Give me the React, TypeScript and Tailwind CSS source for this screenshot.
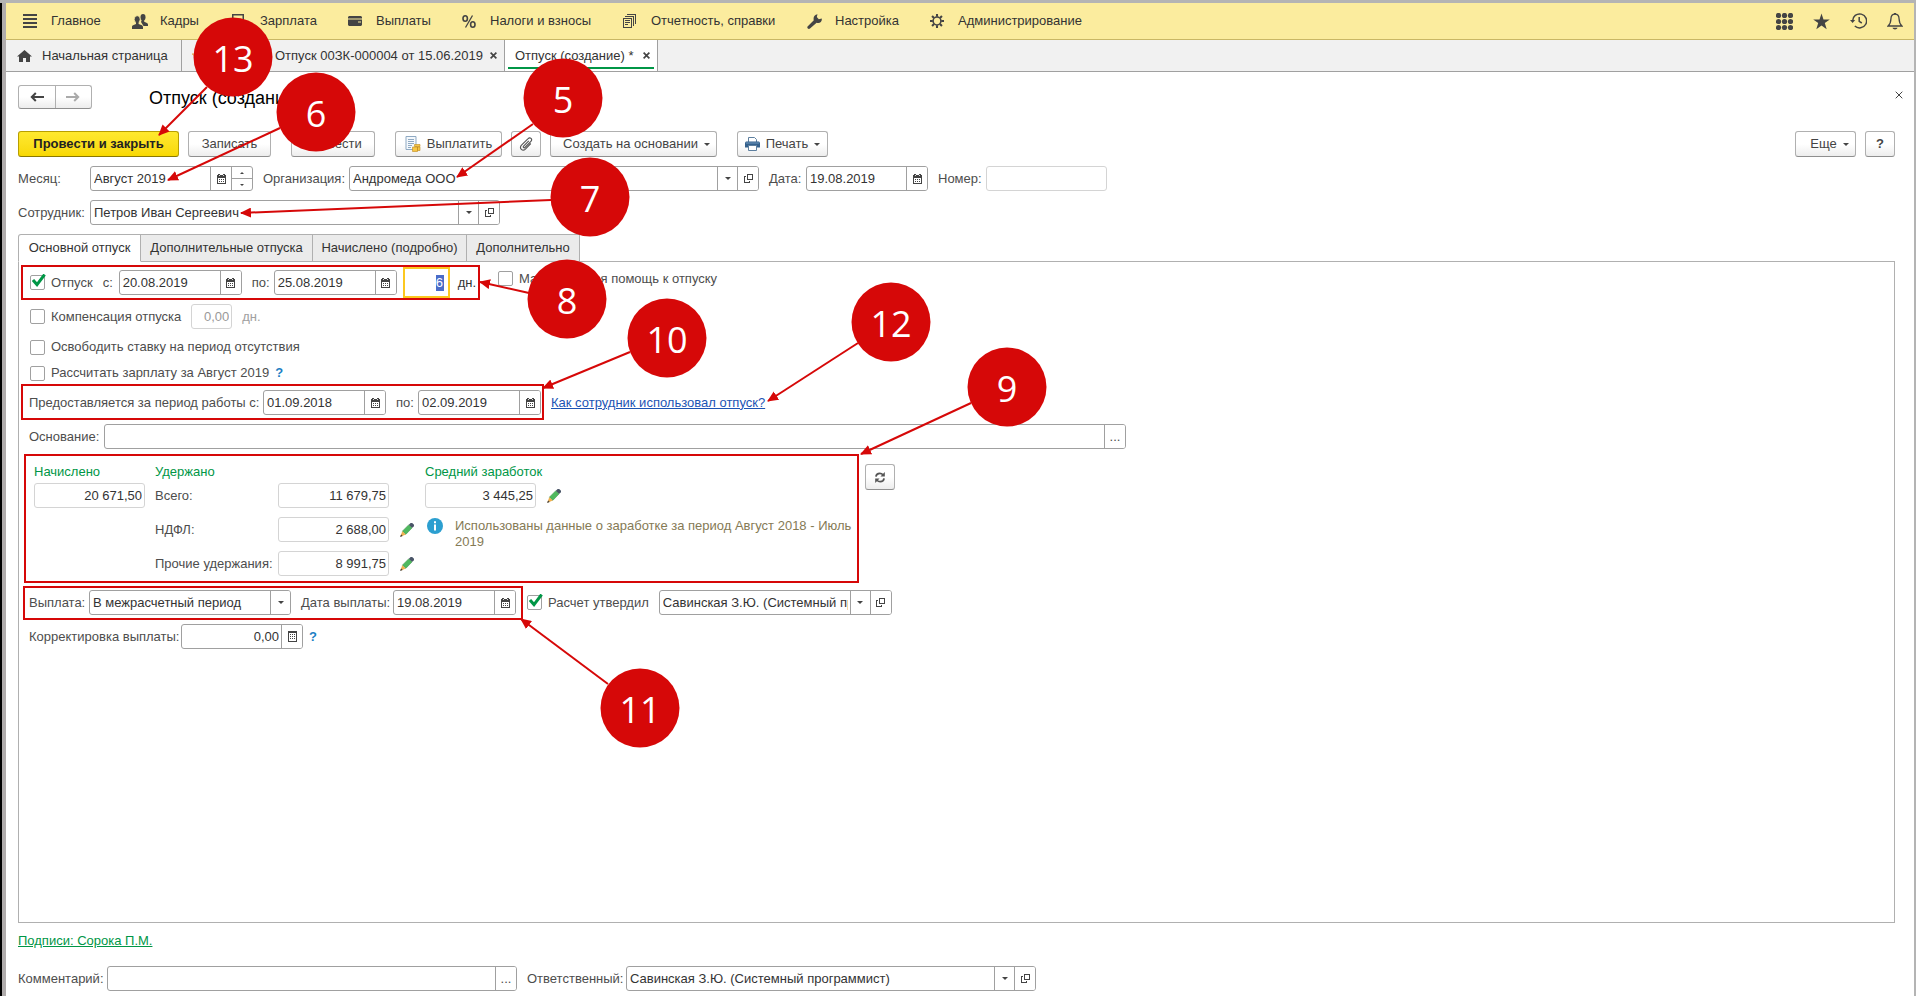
import React, { useId, useState } from "react";

type Box = { x: number; y: number; w: number; h: number };

// numbered notes drawn over the form
const callouts = [
  { n: 5, cx: 563, cy: 98, from: [533, 124], to: [457, 177] },
  { n: 6, cx: 316, cy: 112, from: [280, 128], to: [168, 180] },
  { n: 7, cx: 590, cy: 197, from: [551, 200], to: [241, 213] },
  { n: 8, cx: 567, cy: 299, from: [529, 293], to: [480, 282] },
  { n: 9, cx: 1007, cy: 387, from: [971, 403], to: [861, 454] },
  { n: 10, cx: 667, cy: 338, from: [630, 352], to: [543, 388] },
  { n: 11, cx: 640, cy: 708, from: [608, 684], to: [521, 619] },
  { n: 12, cx: 891, cy: 322, from: [858, 343], to: [768, 401] },
  { n: 13, cx: 233, cy: 57, from: [207, 87], to: [159, 135] },
];

const frames: Box[] = [
  { x: 21, y: 265, w: 459, h: 35 },
  { x: 21, y: 384, w: 523, h: 36 },
  { x: 24, y: 454, w: 835, h: 129 },
  { x: 23, y: 586, w: 500, h: 34 },
];

/* ---------- icons ---------- */

function CalendarIcon() {
  return (
    <svg width="9" height="10" viewBox="0 0 9 10" shapeRendering="crispEdges" fill="#444">
      <path d="M0 1h9v9H0z M1 4v5h7V4z" fillRule="evenodd" />
      <path d="M1 0h2v1H1zM6 0h2v1H6zM2 5h1v1H2zM4 5h1v1H4zM6 5h1v1H6zM2 7h1v1H2zM4 7h1v1H4zM6 7h1v1H6z" />
      <path d="M2 1h1v1H2zM6 1h1v1H6z" fill="#ddd" />
    </svg>
  );
}

function CalculatorIcon() {
  return (
    <svg width="9" height="11" viewBox="0 0 9 11" shapeRendering="crispEdges" fill="#444">
      <path d="M0 0h9v11H0z M1 2v8h7V2z" fillRule="evenodd" />
      <path d="M2 3h1v1H2zM4 3h1v1H4zM6 3h1v1H6zM2 5h1v1H2zM4 5h1v1H4zM6 5h1v1H6zM2 7h1v1H2zM4 7h1v1H4zM6 7h1v1H6z" />
    </svg>
  );
}

function OpenIcon() {
  return (
    <svg width="9" height="9" viewBox="0 0 9 9" fill="none" stroke="#444" shapeRendering="crispEdges">
      <path d="M3.5 0.5h5v5h-5z" />
      <path d="M2 2.5H0.5v6h5V7" />
    </svg>
  );
}

function Caret() {
  return (
    <svg width="6" height="3" viewBox="0 0 6 3" fill="#444" className="shrink-0">
      <path d="M0 0h6L3 3z" />
    </svg>
  );
}

function PencilIcon() {
  return (
    <svg width="14" height="14" viewBox="0 0 14 14">
      <path d="M10.600 0h1.600L14 1.800v1.400L12 5 8.600 1.900z" fill="#4a5568" />
      <path d="M8.600 1.900 12 5 5.800 11.400 2.300 8.200z" fill="#4fb95f" stroke="#3a8f48" strokeWidth="0.500" />
      <path d="M2.300 8.200 5.800 11.400 1.200 13.600 0.500 12.900z" fill="#f0b050" />
      <path d="M1.100 11.600 2.700 13 0 14z" fill="#3c3c3c" />
    </svg>
  );
}

function CloseIcon({ size = 8, bold = false }: { size?: number; bold?: boolean }) {
  return (
    <svg width={size} height={size} viewBox="0 0 8 8" stroke="#444" strokeWidth={bold ? 1.9 : 1}>
      <path d="M0.7 0.7 7.3 7.3M7.3 0.7 0.7 7.3" />
    </svg>
  );
}

function ArrowIcon({ className }: { className: string }) {
  return (
    <svg width="14" height="10" viewBox="0 0 14 10" fill="none" stroke="currentColor" strokeWidth="2" className={className}>
      <path d="M14 5H2M5.8 1 1.8 5l4 4" />
    </svg>
  );
}

const menuIcons: Record<string, React.ReactNode> = {
  main: (
    <svg width="14" height="14" viewBox="0 0 14 14" fill="#444" shapeRendering="crispEdges">
      <path d="M0 0h14v2H0zM0 4h14v2H0zM0 8h14v2H0zM0 12h14v2H0z" />
    </svg>
  ),
  people: (
    <svg width="16" height="15" viewBox="0 0 16 15" fill="#444">
      <ellipse cx="11" cy="3.200" rx="2.500" ry="3.200" />
      <path d="M10 5h2.200v2.800l2.800 1.200c.700.400 1 .900 1 1.600V12h-4.500L9 8z" />
      <ellipse cx="5.200" cy="5.300" rx="3" ry="3.600" stroke="#fbec9e" strokeWidth="0.800" />
      <path d="M4 8h2.600v2l3.300 1.300c.700.300 1.100.900 1.100 1.600V15H0v-2.100c0-.7.300-1.300 1.100-1.600L4 10z" />
    </svg>
  ),
  salary: (
    <svg width="12" height="14" viewBox="0 0 12 14" fill="none" stroke="#444" strokeWidth="1.500">
      <path d="M0.750 0.750h10.500v12.500H0.750zM3 6h6M3 9h6" />
    </svg>
  ),
  card: (
    <svg width="14" height="10" viewBox="0 0 14 10" fill="#444">
      <path d="M1 0h12l1 1v1.500H0V1zM0 3.500h14V9l-1 1H1L0 9z" />
      <path d="M10 5.500h3v1h-3z" fill="#fbec9e" />
    </svg>
  ),
  percent: (
    <svg width="14" height="13" viewBox="0 0 14 13" fill="none" stroke="#444">
      <ellipse cx="3.200" cy="3.500" rx="2.200" ry="2.700" strokeWidth="1.600" />
      <ellipse cx="10.800" cy="9.500" rx="2.200" ry="2.700" strokeWidth="1.600" />
      <path d="M10.500 0.500 3.500 12.500" strokeWidth="1.300" />
    </svg>
  ),
  report: (
    <svg width="13" height="14" viewBox="0 0 13 14" fill="none" stroke="#444" shapeRendering="crispEdges">
      <path d="M0.500 4.500h8v9h-8zM2.500 3V2.500h8V12M4.500 1V0.500h8V10M2 6.500h5M2 8.500h5M2 10.500h3" />
    </svg>
  ),
  wrench: (
    <svg width="15" height="15" viewBox="0 0 15 15" fill="#444">
      <path d="M10.500 0.200 9.800 3l2 2.200 2.900-.6c.6 2.200-1 4.400-3.400 4.500-.7 0-1.200-.1-1.700-.4L3 14.500c-.6.600-1.600.600-2.200 0-.700-.7-.700-1.600 0-2.200l6-6C5.900 3.300 7.500.500 10.500.200z" />
    </svg>
  ),
  gear: (
    <svg width="14" height="14" viewBox="0 0 15 15" fill="none" stroke="#444">
      <circle cx="7.500" cy="7.500" r="4.200" strokeWidth="1.700" />
      <path
        d="M7.500 0v3M7.500 12v3M0 7.500h3M12 7.500h3M2.200 2.200l2.100 2.100M10.700 10.700l2.100 2.100M12.800 2.200l-2.100 2.100M4.300 10.700l-2.100 2.100"
        strokeWidth="2.200"
      />
    </svg>
  ),
};

const menu = [
  { icon: "main", text: "Главное", width: "w-[109px]" },
  { icon: "people", text: "Кадры", width: "w-[100px]" },
  { icon: "salary", text: "Зарплата", width: "w-[116px]" },
  { icon: "card", text: "Выплаты", width: "w-[114px]" },
  { icon: "percent", text: "Налоги и взносы", width: "w-[161px]" },
  { icon: "report", text: "Отчетность, справки", width: "w-[184px]" },
  { icon: "wrench", text: "Настройка", width: "w-[123px]" },
  { icon: "gear", text: "Администрирование", width: "w-[160px]" },
];

/* ---------- controls ---------- */

const cell = "flex w-[21px] shrink-0 items-center justify-center border-l border-[#a0a0a0] bg-white";

type FieldProps = {
  label: string;
  value?: string;
  labelWidth?: string;
  labelHidden?: boolean;
  width: string;
  icon?: "calendar" | "calculator" | "dots";
  spinner?: boolean;
  readOnly?: boolean;
  right?: boolean;
};

function Field({
  label,
  value = "",
  labelWidth = "",
  labelHidden,
  width,
  icon,
  spinner,
  readOnly,
  right,
}: FieldProps) {
  const id = useId();
  const [text, setText] = useState(value);

  return (
    <div className="flex items-center">
      {!labelHidden && (
        <label htmlFor={id} className={`shrink-0 whitespace-nowrap ${labelWidth}`}>
          {label}
        </label>
      )}
      <div
        className={`flex h-[25px] overflow-hidden rounded-[3px] border bg-white ${width} ${
          readOnly ? "border-[#d4d4d4]" : "border-[#a0a0a0]"
        }`}
      >
        <input
          id={id}
          aria-label={labelHidden ? label : undefined}
          value={text}
          readOnly={readOnly}
          onChange={(e) => setText(e.target.value)}
          className={`w-full min-w-0 flex-1 text-[#333] outline-none ${right ? "pr-[2px] text-right" : "px-[3px]"}`}
        />
        {icon && (
          <button type="button" aria-label="Выбрать" className={cell}>
            {icon === "calendar" && <CalendarIcon />}
            {icon === "calculator" && <CalculatorIcon />}
            {icon === "dots" && <span>...</span>}
          </button>
        )}
        {spinner && (
          <div className="flex w-[21px] shrink-0 flex-col border-l border-[#a0a0a0]">
            <button type="button" aria-label="Больше" className="flex flex-1 items-center justify-center border-b border-[#a0a0a0]">
              <svg width="4" height="2" viewBox="0 0 4 2" fill="#444">
                <path d="M0 2h4L2 0z" />
              </svg>
            </button>
            <button type="button" aria-label="Меньше" className="flex flex-1 items-center justify-center">
              <svg width="4" height="2" viewBox="0 0 4 2" fill="#444">
                <path d="M0 0h4L2 2z" />
              </svg>
            </button>
          </div>
        )}
      </div>
    </div>
  );
}

type PickerProps = {
  label: string;
  value: string;
  labelWidth?: string;
  labelHidden?: boolean;
  width: string;
  open?: boolean;
};

function Picker({ label, value, labelWidth = "", labelHidden, width, open }: PickerProps) {
  const id = useId();

  return (
    <div className="flex items-center">
      {!labelHidden && (
        <label htmlFor={id} className={`shrink-0 whitespace-nowrap ${labelWidth}`}>
          {label}
        </label>
      )}
      <div className={`flex h-[25px] overflow-hidden rounded-[3px] border border-[#a0a0a0] bg-white ${width}`}>
        <div className="relative min-w-0 flex-1">
          <select
            id={id}
            aria-label={labelHidden ? label : undefined}
            defaultValue={value}
            className="h-full w-full appearance-none overflow-hidden pr-[22px] pl-[3px] text-[#333] outline-none"
          >
            <option>{value}</option>
          </select>
          <span className="pointer-events-none absolute inset-y-0 right-0 flex w-5 items-center justify-center border-l border-[#a0a0a0] bg-white">
            <Caret />
          </span>
        </div>
        {open && (
          <button type="button" aria-label="Открыть" className={cell}>
            <OpenIcon />
          </button>
        )}
      </div>
    </div>
  );
}

function Check({ label, checked = false }: { label: string; checked?: boolean }) {
  const [on, setOn] = useState(checked);

  return (
    <label className="flex items-center gap-[6px] whitespace-nowrap">
      <span className="relative block w-4 pl-px">
        <input
          type="checkbox"
          checked={on}
          onChange={() => setOn(!on)}
          className="block size-[15px] appearance-none rounded-[2px] border border-[#a0a0a0] bg-white"
        />
        {on && (
          <svg
            width="14"
            height="13"
            viewBox="0 0 14 13"
            fill="none"
            stroke="#009646"
            strokeWidth="3"
            className="pointer-events-none absolute -top-px left-[3px]"
          >
            <path d="M1 6 5 10.600 12.600 0.500" />
          </svg>
        )}
      </span>
      {label}
    </label>
  );
}

function Button({ children, className = "", ...rest }: React.ButtonHTMLAttributes<HTMLButtonElement>) {
  return (
    <button
      type="button"
      className={`flex h-[26px] shrink-0 items-center justify-center gap-[6px] rounded-[3px] border border-[#b0b0b0] border-b-[#8f8f8f] bg-linear-to-b from-white from-50% to-[#ededed] whitespace-nowrap text-[#444] ${className}`}
      {...rest}
    >
      {children}
    </button>
  );
}

function EditButton() {
  return (
    <button type="button" aria-label="Изменить">
      <PencilIcon />
    </button>
  );
}

/* ---------- page parts ---------- */

function MainMenu() {
  return (
    <nav className="flex h-[37px] items-center border-b border-[#c9b765] bg-[#fbec9e] pr-[11px] pl-[17px] text-[#333]">
      {menu.map((item) => (
        <a key={item.text} href="#" className={`flex shrink-0 items-center whitespace-nowrap ${item.width}`}>
          <span className="w-7 shrink-0">{menuIcons[item.icon]}</span>
          {item.text}
        </a>
      ))}
      <div className="ml-auto flex items-center gap-5">
        <button type="button" aria-label="Меню функций">
          <svg width="17" height="17" viewBox="0 0 17 17" fill="#444">
            {[2.500, 8.500, 14.500].map((y) => [2.500, 8.500, 14.500].map((x) => <circle key={`${x}-${y}`} cx={x} cy={y} r="2.600" />))}
          </svg>
        </button>
        <button type="button" aria-label="Избранное">
          <svg width="17" height="17" viewBox="0 0 17 17" fill="#444">
            <path d="M8.500 0.500 10.500 6.400h6.300l-5 3.700 1.900 6.200-5.200-3.800-5.200 3.800 1.900-6.200-5-3.700h6.300z" />
          </svg>
        </button>
        <button type="button" aria-label="История">
          <svg width="17" height="16" viewBox="0 0 17 16" fill="none" stroke="#444" strokeWidth="1.500">
            <path d="M2.600 8a7 7 0 1 1 2.200 5" />
            <path d="M9.200 4v4.400l2.600 1.600" />
            <path d="M0 7h5.200L2.600 10z" fill="#444" stroke="none" />
          </svg>
        </button>
        <button type="button" aria-label="Уведомления">
          <svg width="16" height="17" viewBox="0 0 16 17" fill="none" stroke="#444" strokeWidth="1.300">
            <path d="M8 1.200c-2.800 0-4 2-4.100 4.800-.1 3.600-.9 5.400-2.800 7h13.800c-1.900-1.600-2.700-3.400-2.800-7C12 3.200 10.800 1.200 8 1.200z" />
            <path d="M5.500 14.800h5c-.4 1.100-1.300 1.700-2.500 1.700s-2.100-.6-2.500-1.700z" fill="#444" stroke="none" />
            <path d="M7 0h2v1.500H7z" fill="#444" stroke="none" />
          </svg>
        </button>
      </div>
    </nav>
  );
}

function WindowTabs() {
  return (
    <div className="flex h-8 border-b border-[#a0a0a0] bg-[#f1f1f1] text-[#333]">
      <a href="#" className="flex w-[176px] shrink-0 items-center gap-[10px] border-r border-[#a0a0a0] pl-[11px]">
        <svg width="15" height="12" viewBox="0 0 15 12" fill="#444">
          <path d="M7.500 0 15 6.500h-2V12H9V8H6v4H2V6.500H0z" />
        </svg>
        Начальная страница
      </a>
      <div className="flex w-[323px] shrink-0 items-center border-r border-[#a0a0a0] pl-[10px]">
        <svg width="16" height="16" viewBox="0 0 17 17" fill="none" stroke="#e8a33d" className="mr-[67px]">
          <path d="M8.500 0.500 10.500 6.400h6.300l-5 3.700 1.900 6.200-5.200-3.800-5.200 3.800 1.900-6.200-5-3.700h6.300z" />
        </svg>
        <a href="#" className="whitespace-nowrap">Отпуск 00ЗК-000004 от 15.06.2019</a>
        <button type="button" aria-label="Закрыть" className="mr-[7px] ml-auto">
          <CloseIcon size={7} bold />
        </button>
      </div>
      <div className="flex w-[153px] shrink-0 border-r border-[#a0a0a0] bg-white px-[3px] pb-[2px]">
        <div className="flex flex-1 items-center border-b-2 border-[#009646] pt-1 pl-[7px]">
          <a href="#" className="whitespace-nowrap">Отпуск (создание) *</a>
          <button type="button" aria-label="Закрыть" className="mr-1 ml-auto">
            <CloseIcon size={7} bold />
          </button>
        </div>
      </div>
    </div>
  );
}

function Toolbar() {
  return (
    <div className="mt-[22px] flex items-center">
      <button
        type="button"
        className="h-[26px] w-[161px] rounded-[3px] border border-[#b89f00] border-b-[#8a7800] bg-linear-to-b from-[#ffe92e] to-[#f8d800] font-bold whitespace-nowrap text-[#222]"
      >
        Провести и закрыть
      </button>
      <Button className="ml-[9px] w-[83px]">Записать</Button>
      <Button className="ml-5 w-[84px]">Провести</Button>
      <Button className="ml-5 w-[107px]">
        <svg width="16" height="16" viewBox="0 0 16 16">
          <path d="M1 0.500h10v13H1z" fill="#f4f8fc" stroke="#8fa9c2" />
          <path d="M3 3.500h6M3 5.500h6M3 7.500h6M3 9.500h4M3 11.500h3" stroke="#8fa9c2" />
          <path d="M9.500 8.500h5.500v2H9.500zM7.500 11h5v4.500h-5zM12.500 11H15v3.500h-2.500z" fill="#f6c644" stroke="#c08a1c" strokeWidth="0.600" />
        </svg>
        Выплатить
      </Button>
      <Button className="ml-[9px] w-[30px]" aria-label="Прикрепленные файлы">
        <svg width="14" height="14" viewBox="0 0 14 14" fill="none" stroke="#555" strokeWidth="1.100">
          <path d="M9.800 3.800 4.600 9.200c-.9 1 .4 2.200 1.300 1.300l6-6.200c2-2.100-.8-4.800-2.800-2.700L2.500 8.200c-2.700 2.900 1 6.700 3.900 3.900l5.400-5.600" />
        </svg>
      </Button>
      <Button className="ml-[9px] w-[167px] pl-[6px]">
        Создать на основании <Caret />
      </Button>
      <Button className="ml-5 w-[91px]">
        <svg width="15" height="14" viewBox="0 0 15 14">
          <path d="M3.500 0.500h6l2 2V6h-8z" fill="#fff" stroke="#5d7f9f" />
          <path d="M1 4.500h13l1 1v5H0v-5z" fill="#35618c" />
          <path d="M1 6h13" stroke="#6f97bd" />
          <path d="M3.500 8.500h8v5h-8z" fill="#fff" stroke="#5d7f9f" />
        </svg>
        Печать <Caret />
      </Button>
      <Button className="ml-auto w-[61px] pl-2">
        Еще <Caret />
      </Button>
      <Button className="ml-[9px] w-[30px] font-bold" aria-label="Справка">?</Button>
    </div>
  );
}

const formTabs = [
  { text: "Основной отпуск", width: "w-[123px]" },
  { text: "Дополнительные отпуска", width: "w-[172px]" },
  { text: "Начислено (подробно)", width: "w-[154px]" },
  { text: "Дополнительно", width: "w-[113px]" },
];

function FormTabs() {
  const [active, setActive] = useState(0);

  return (
    <div role="tablist" className="relative mt-[9px] -mb-px flex">
      {formTabs.map((tab, i) => (
        <button
          key={tab.text}
          type="button"
          role="tab"
          aria-selected={i === active}
          onClick={() => setActive(i)}
          className={`h-7 border border-l-0 border-[#b0b0b0] whitespace-nowrap text-[#333] first:rounded-tl-[3px] first:border-l ${tab.width} ${
            i === active ? "border-b-white bg-white" : "bg-[#ebebeb]"
          }`}
        >
          {tab.text}
        </button>
      ))}
    </div>
  );
}

function Totals() {
  return (
    <div className="mt-[15px] flex items-start">
      <div className="ml-[5px] flex w-[831px]">
        <div className="w-[121px]">
          <h2 className="mb-[3px] text-[#009646]">Начислено</h2>
          <Field label="Начислено" labelHidden value="20 671,50" width="w-[111px]" readOnly right />
        </div>
        <div className="w-[270px]">
          <h2 className="mb-[3px] text-[#009646]">Удержано</h2>
          <div className="flex flex-col gap-[9px]">
            <Field label="Всего:" value="11 679,75" labelWidth="w-[123px]" width="w-[111px]" readOnly right />
            <div className="flex items-center gap-[11px]">
              <Field label="НДФЛ:" value="2 688,00" labelWidth="w-[123px]" width="w-[111px]" readOnly right />
              <EditButton />
            </div>
            <div className="flex items-center gap-[11px]">
              <Field label="Прочие удержания:" value="8 991,75" labelWidth="w-[123px]" width="w-[111px]" readOnly right />
              <EditButton />
            </div>
          </div>
        </div>
        <div className="w-[430px]">
          <h2 className="mb-[3px] text-[#009646]">Средний заработок</h2>
          <div className="flex items-center gap-[11px]">
            <Field label="Средний заработок" labelHidden value="3 445,25" width="w-[111px]" readOnly right />
            <EditButton />
          </div>
          <div className="mt-[10px] flex items-start gap-3">
            <svg width="16" height="16" viewBox="0 0 16 16" className="ml-[2px] shrink-0">
              <circle cx="8" cy="8" r="8" fill="#2c9fd0" />
              <path d="M7 3.200h2v2H7zM7 6.500h2v6H7z" fill="#fff" />
            </svg>
            <p className="w-[400px] shrink-0 leading-4 text-[#857a55]">
              Использованы данные о заработке за период Август 2018 - Июль 2019
            </p>
          </div>
        </div>
      </div>
      <Button className="w-[30px]" aria-label="Пересчитать">
        <svg width="10" height="11" viewBox="0 0 11 12" fill="none" stroke="#555" strokeWidth="1.900">
          <path d="M1 5C1.300 2.700 3 1.400 5.300 1.400c1.500 0 2.600.6 3.500 1.600M10 7c-.3 2.300-2 3.600-4.300 3.600-1.500 0-2.600-.6-3.500-1.600" />
          <path d="M10.800 0v4.800H6zM0.200 12V7.200H5z" fill="#555" stroke="none" />
        </svg>
      </Button>
    </div>
  );
}

function VacationPanel() {
  return (
    <div className="min-h-[662px] border border-[#b0b0b0] pt-[5px] pl-[10px]">
      <div className="flex h-[31px] items-center">
        <Check label="Отпуск" checked />
        <div className="ml-[10px]">
          <Field label="с:" value="20.08.2019" labelWidth="w-[16px]" width="w-[123px]" icon="calendar" />
        </div>
        <div className="ml-[10px]">
          <Field label="по:" value="25.08.2019" labelWidth="w-[22px]" width="w-[123px]" icon="calendar" />
        </div>
        <label className="ml-[6px] flex items-center gap-2 text-[#333]">
          <span className="flex h-[31px] w-[47px] items-center justify-end border-2 border-[#fcc820] pr-1">
            <input aria-label="Количество дней" defaultValue="6" className="w-2 bg-[#4a6cc8] text-white outline-none" />
          </span>
          дн.
        </label>
        <div className="mb-2 ml-[21px]">
          <Check label="Материальная помощь к отпуску" />
        </div>
      </div>

      <div className="mt-[6px] flex items-center gap-[10px]">
        <Check label="Компенсация отпуска" />
        <div className="flex items-center gap-[10px] text-[#a0a0a0] [&_input]:text-[#999]">
          <Field label="Дни компенсации" labelHidden value="0,00" width="w-[41px]" readOnly right />
          дн.
        </div>
      </div>
      <div className="mt-[10px]">
        <Check label="Освободить ставку на период отсутствия" />
      </div>
      <div className="mt-[10px] flex items-center gap-[6px]">
        <Check label="Рассчитать зарплату за Август 2019" />
        <a href="#" className="font-bold text-[#1c7fc4]">?</a>
      </div>

      <div className="mt-[9px] flex items-center gap-[10px]">
        <Field label="Предоставляется за период работы с:" value="01.09.2018" labelWidth="w-[234px]" width="w-[123px]" icon="calendar" />
        <Field label="по:" value="02.09.2019" labelWidth="w-[22px]" width="w-[123px]" icon="calendar" />
        <a href="#" className="text-[#1c54b4] underline">Как сотрудник использовал отпуск?</a>
      </div>

      <div className="mt-[9px]">
        <Field label="Основание:" labelWidth="w-[75px]" width="w-[1022px]" icon="dots" />
      </div>

      <Totals />

      <div className="mt-[14px] flex items-center gap-[10px]">
        <Picker label="Выплата:" value="В межрасчетный период" labelWidth="w-[60px]" width="w-[202px]" />
        <Field label="Дата выплаты:" value="19.08.2019" labelWidth="w-[92px]" width="w-[123px]" icon="calendar" />
        <Check label="Расчет утвердил" checked />
        <Picker label="Утвердил" labelHidden value="Савинская З.Ю. (Системный программист)" width="w-[233px]" open />
      </div>

      <div className="mt-[9px] flex items-center gap-[6px]">
        <Field label="Корректировка выплаты:" value="0,00" labelWidth="w-[152px]" width="w-[122px]" icon="calculator" right />
        <a href="#" className="font-bold text-[#1c7fc4]">?</a>
      </div>
    </div>
  );
}

function Notes() {
  return (
    <div className="pointer-events-none absolute inset-0 overflow-hidden">
      {frames.map((f) => (
        <div
          key={f.y}
          className="absolute border-2 border-[#d60808]"
          style={{ left: f.x, top: f.y, width: f.w, height: f.h }}
        />
      ))}
      <svg className="absolute inset-0 h-full w-full">
        <defs>
          <marker id="head" markerWidth="11" markerHeight="10" refX="10" refY="5" orient="auto" markerUnits="userSpaceOnUse">
            <path d="M0 0 11 5 0 10z" fill="#d60808" />
          </marker>
        </defs>
        {callouts.map((c) => (
          <line
            key={c.n}
            x1={c.from[0]}
            y1={c.from[1]}
            x2={c.to[0]}
            y2={c.to[1]}
            stroke="#d60808"
            strokeWidth="2"
            markerEnd="url(#head)"
          />
        ))}
      </svg>
      {callouts.map((c) => (
        <div
          key={c.n}
          className="absolute flex size-[79px] -translate-1/2 items-center justify-center rounded-full bg-[#d60808] pt-[2px] font-['Open_Sans',sans-serif] text-[36px] leading-none font-medium text-white"
          style={{ left: c.cx, top: c.cy }}
        >
          {c.n}
        </div>
      ))}
    </div>
  );
}

function App() {
  return (
    <div className="relative min-h-screen border-t-[3px] border-r-2 border-[#b4b4b4] bg-white font-['Liberation_Sans',Arial,sans-serif] text-[13px] leading-4 text-[#4d4d4d]">
      <div className="min-h-[993px] border-l-2 border-black">
        <div className="min-h-[993px] border-l-4 border-[#b0acac]">
          <MainMenu />
          <WindowTabs />
          <main className="pr-[19px] pl-3">
            <div className="flex items-center pt-[13px]">
              <div className="flex h-6 w-[74px] overflow-hidden rounded-[3px] border border-[#b0b0b0] border-b-[#8f8f8f] bg-linear-to-b from-white from-50% to-[#ededed]">
                <button type="button" aria-label="Назад" className="flex flex-1 items-center justify-center border-r border-[#b0b0b0]">
                  <ArrowIcon className="text-[#444]" />
                </button>
                <button type="button" aria-label="Вперед" className="flex flex-1 items-center justify-center">
                  <ArrowIcon className="rotate-180 text-[#aaa]" />
                </button>
              </div>
              <h1 className="ml-[57px] pt-px text-[18px] text-black">Отпуск (создание)</h1>
              <button type="button" aria-label="Закрыть форму" className="-mr-2 mb-1 ml-auto">
                <CloseIcon />
              </button>
            </div>

            <Toolbar />

            <div className="mt-[9px] flex items-center gap-[10px]">
              <Field label="Месяц:" value="Август 2019" labelWidth="w-[72px]" width="w-[163px]" icon="calendar" spinner />
              <Picker label="Организация:" value="Андромеда ООО" labelWidth="w-[86px]" width="w-[410px]" open />
              <Field label="Дата:" value="19.08.2019" labelWidth="w-[37px]" width="w-[122px]" icon="calendar" />
              <Field label="Номер:" labelWidth="w-[48px]" width="w-[121px]" readOnly />
            </div>
            <div className="mt-[9px]">
              <Picker label="Сотрудник:" value="Петров Иван Сергеевич" labelWidth="w-[72px]" width="w-[410px]" open />
            </div>

            <FormTabs />
            <VacationPanel />

            <a href="#" className="mt-[10px] inline-block text-[#009646] underline">Подписи: Сорока П.М.</a>
            <div className="mt-[17px] flex items-center gap-[10px]">
              <Field label="Комментарий:" labelWidth="w-[89px]" width="w-[410px]" icon="dots" />
              <Picker
                label="Ответственный:"
                value="Савинская З.Ю. (Системный программист)"
                labelWidth="w-[99px]"
                width="w-[410px]"
                open
              />
            </div>
          </main>
        </div>
      </div>
      <div className="absolute inset-x-0 -top-[3px] bottom-0">
        <Notes />
      </div>
    </div>
  );
}

export default App;
